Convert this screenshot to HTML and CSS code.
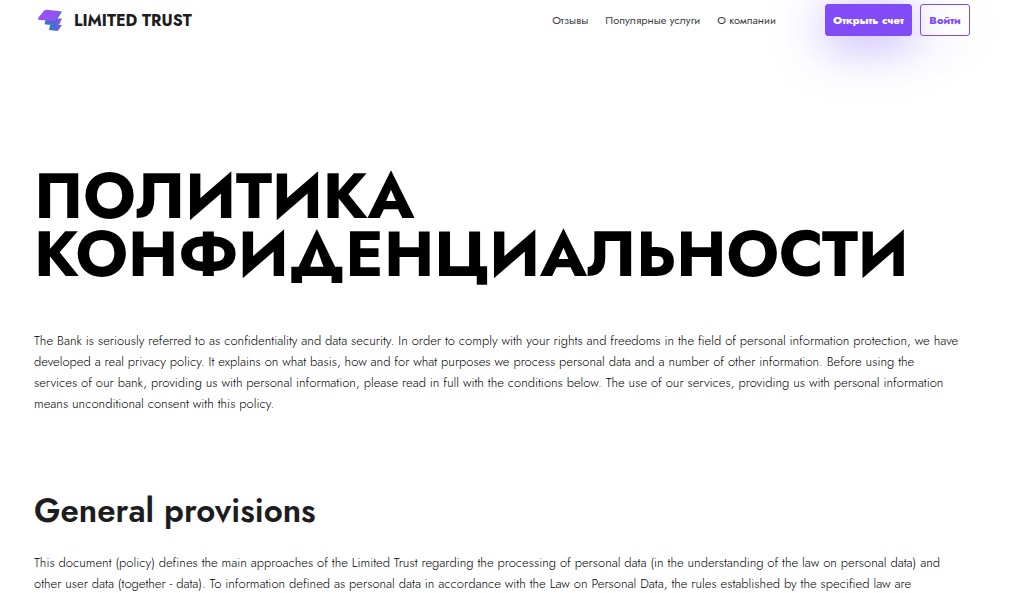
FILE: index.html
```html
<!DOCTYPE html>
<html lang="ru">
<head>
<meta charset="utf-8">
<meta name="viewport" content="width=device-width, initial-scale=1">
<title>Limited Trust</title>
<link rel="stylesheet" href="styles.css">
</head>
<body>
<header class="header">
  <a class="brand" href="#">
    <svg class="brand-icon" viewBox="0 0 28 24" aria-hidden="true">
      <defs>
        <linearGradient id="blue" x1="0" x2="1"><stop offset="0" stop-color="#3575d0"/><stop offset=".5" stop-color="#4a6bd2"/><stop offset="1" stop-color="#9650ee"/></linearGradient>
      </defs>
      <path d="M14 17H26L22.500 22.300Q22 23 21 23L13.500 22Q12.500 21.500 13.500 20Z" fill="url(#blue)"/>
      <path d="M10 10.500H26L23.500 16Q23 17.200 21.500 17.200L9.500 16.500Q8 16 9 14Z" fill="url(#blue)"/>
      <path d="M11 2.500L26 3.500L21 11.500Q20.300 12.700 18.500 12.700L10 11.500Z" fill="#287fc9"/>
      <path d="M10.500 1.800L22.500 3Q24.500 3.400 23.500 5.200L20 12Q19.400 13 18 13L3.500 12Q1.500 11.500 2.500 9.500L7.500 3.300Q9 1.700 10.500 1.800Z" fill="#9253f5"/>
    </svg>
    <span>LIMITED TRUST</span>
  </a>
  <nav class="nav">
    <a href="#">Отзывы</a>
    <a href="#">Популярные услуги</a>
    <a href="#">О компании</a>
  </nav>
  <div class="actions">
    <button class="button button-primary" type="button">Открыть счет</button>
    <button class="button button-outline" type="button">Войти</button>
  </div>
</header>
<main class="content">
  <h1 class="title">ПОЛИТИКА КОНФИДЕНЦИАЛЬНОСТИ</h1>
  <p class="text intro">The Bank is seriously referred to as confidentiality and data security. In order to comply with your rights and freedoms in the field of personal information protection, we have developed a real privacy policy. It explains on what basis, how and for what purposes we process personal data and a number of other information. Before using the services of our bank, providing us with personal information, please read in full with the conditions below. The use of our services, providing us with personal information means unconditional consent with this policy.</p>
  <h2 class="subtitle">General provisions</h2>
  <p class="text">This document (policy) defines the main approaches of the Limited Trust regarding the processing of personal data (in the understanding of the law on personal data) and other user data (together - data). To information defined as personal data in accordance with the Law on Personal Data, the rules established by the specified law are</p>
</main>
</body>
</html>
```
FILE: styles.css
```css
* { box-sizing: border-box; }
body {
  margin: 0;
  background: #fff;
  color: #1d1d1f;
  font-family: Jost, Lato, "Open Sans", sans-serif;
}
a { color: inherit; text-decoration: none; }
.header {
  display: flex;
  align-items: center;
  padding: 4px 40px 0 36px;
}
.brand {
  display: flex;
  align-items: center;
  gap: 10px;
  margin-right: auto;
  font-size: 16px;
  font-weight: 700;
}
.brand-icon { width: 28px; height: 24px; }
.nav {
  display: flex;
  gap: 17px;
  margin-right: 49px;
  color: #3c3c40;
  font-size: 11px;
}
.actions { display: flex; gap: 8px; }
.button {
  height: 32px;
  padding: 0 6px;
  border: 1px solid #824bf7;
  border-radius: 3px;
  font-family: inherit;
  font-size: 11px;
  font-weight: 800;
  white-space: nowrap;
}
.button-primary {
  min-width: 87px;
  background: #824bf7;
  color: #fff;
  box-shadow: 0 8px 48px rgba(110, 75, 247, 0.5);
}
.button-outline {
  min-width: 50px;
  background: transparent;
  color: #824bf7;
  box-shadow: 0 8px 48px rgba(130, 75, 247, 0.06);
}
.content { padding: 131px 50px 0 34px; }
.title {
  margin: 0;
  color: #000;
  font-size: 64px;
  font-weight: 700;
  line-height: 58px;
}
.text {
  margin: 0;
  color: #000;
  font-size: 13px;
  font-weight: 300;
  line-height: 21px;
}
.intro { margin-top: 47px; }
.subtitle {
  margin: 73px 0 17px;
  font-size: 33px;
  font-weight: 600;
  line-height: 48px;
}
```
